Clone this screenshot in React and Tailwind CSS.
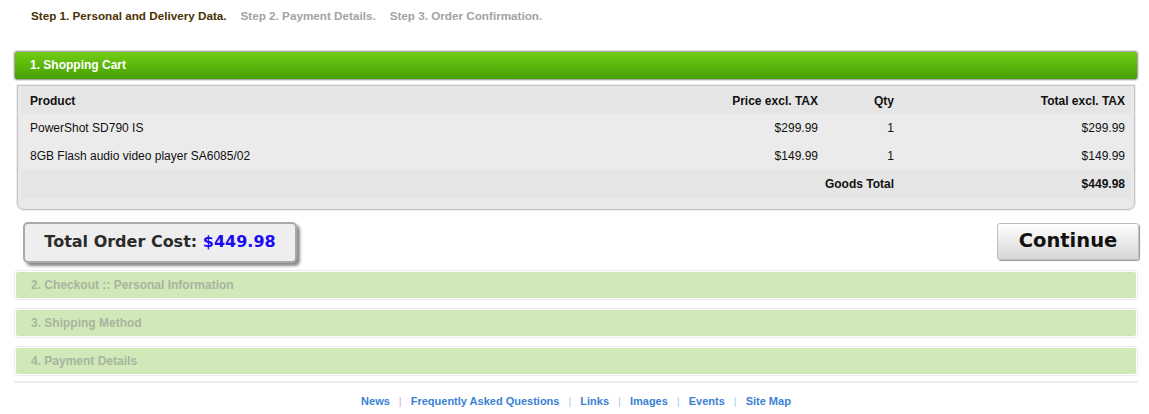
import React from 'react';

const rows = [
  { name: 'PowerShot SD790 IS', price: '$299.99', qty: '1', total: '$299.99' },
  { name: '8GB Flash audio video player SA6085/02', price: '$149.99', qty: '1', total: '$149.99' },
];

const links = ['News', 'Frequently Asked Questions', 'Links', 'Images', 'Events', 'Site Map'];

function Collapsed({ title }) {
  return (
    <div className="h-[30px] rounded-[3px] border border-[#ececec] p-px">
      <div className="flex h-full items-center rounded-[2px] bg-[#cfeab8] pl-[15px] text-[12px] font-bold text-[#a9b4a0]">
        {title}
      </div>
    </div>
  );
}

export default function App() {
  return (
    <div className="w-[1149px] bg-white font-['Liberation_Sans',Arial,sans-serif] text-[12px]">
      <div className="flex gap-[14px] pl-[31px] pt-[7px] text-[11.7px] font-bold">
        <span className="text-[#4b3203]">Step 1. Personal and Delivery Data.</span>
        <span className="text-[#a3a3a3]">Step 2. Payment Details.</span>
        <span className="text-[#a3a3a3]">Step 3. Order Confirmation.</span>
      </div>

      <div className="ml-[14px] mt-[26px] w-[1124px]">
        <div className="flex h-[29px] items-center rounded-[3px] border border-[#a7a7a7] bg-gradient-to-b from-[#72cd14] to-[#45a003] pl-[15px] font-bold text-white shadow-[0_0_0_1px_#e2e2e2]">
          1. Shopping Cart
        </div>

        <div className="mx-[3px] mt-[5px] rounded-b-[7px] border border-[#c4c4c4] bg-[#e9e9e9] px-[3px] pb-[11px] pt-[2px] shadow-[0_0_0_1px_#eeeeee]">
          <div className="grid h-[26px] grid-cols-[567px_236px_76px_1fr] items-center bg-[#e5e5e5] font-bold text-[#111]">
            <div className="pl-[9px]">Product</div>
            <div className="pr-[6px] text-right">Price excl. TAX</div>
            <div className="pr-[6px] text-right">Qty</div>
            <div className="pr-[6px] text-right">Total excl. TAX</div>
          </div>
          {rows.map((r) => (
            <div key={r.name} className="grid h-[28px] grid-cols-[567px_236px_76px_1fr] items-center bg-[#ebebeb] text-[#111]">
              <div className="pl-[9px]">{r.name}</div>
              <div className="pr-[6px] text-right">{r.price}</div>
              <div className="pr-[6px] text-right">{r.qty}</div>
              <div className="pr-[6px] text-right">{r.total}</div>
            </div>
          ))}
          <div className="grid h-[28px] grid-cols-[567px_236px_76px_1fr] items-center bg-[#e5e5e5] font-bold text-[#111]">
            <div />
            <div />
            <div className="whitespace-nowrap pr-[6px] text-right">Goods Total</div>
            <div className="pr-[6px] text-right">$449.98</div>
          </div>
        </div>

        <div className="mt-[12px] flex items-start justify-between">
          <div className="ml-[9px] flex h-[41px] w-[274px] items-center justify-center rounded-[5px] border-2 border-[#a9a9a9] bg-[#eeeeee] font-['DejaVu_Sans',Verdana,sans-serif] text-[16px] font-bold text-[#2b2b2b] shadow-[3px_3px_3px_#8a8a8a]">
            Total Order Cost:&nbsp;<span className="text-[#1d0bf0]">$449.98</span>
          </div>
          <button className="-mr-[1px] mt-px flex h-[37px] w-[142px] items-center justify-center rounded-[3px] border border-[#bdbdbd] bg-gradient-to-b from-[#ffffff] to-[#d6d6d6] font-['DejaVu_Sans',Verdana,sans-serif] text-[19.5px] font-bold text-[#111] shadow-[1px_1px_1px_#9a9a9a]">
            Continue
          </button>
        </div>

        <div className="mt-[7px] flex flex-col gap-[8px]">
          <Collapsed title="2. Checkout :: Personal Information" />
          <Collapsed title="3. Shipping Method" />
          <Collapsed title="4. Payment Details" />
        </div>

        <div className="mt-[5px] h-[2px] bg-[#eeeeee]" />

        <div className="flex items-center justify-center gap-[9px] pt-[10px] text-[11px] font-bold text-[#3a82d4]">
          {links.map((l, i) => (
            <React.Fragment key={l}>
              {i > 0 && (
                <span className={i === 1 ? 'font-normal text-[#e6a7c4]' : 'font-normal text-[#a9cdf0]'}>|</span>
              )}
              <span>{l}</span>
            </React.Fragment>
          ))}
        </div>
      </div>
    </div>
  );
}
